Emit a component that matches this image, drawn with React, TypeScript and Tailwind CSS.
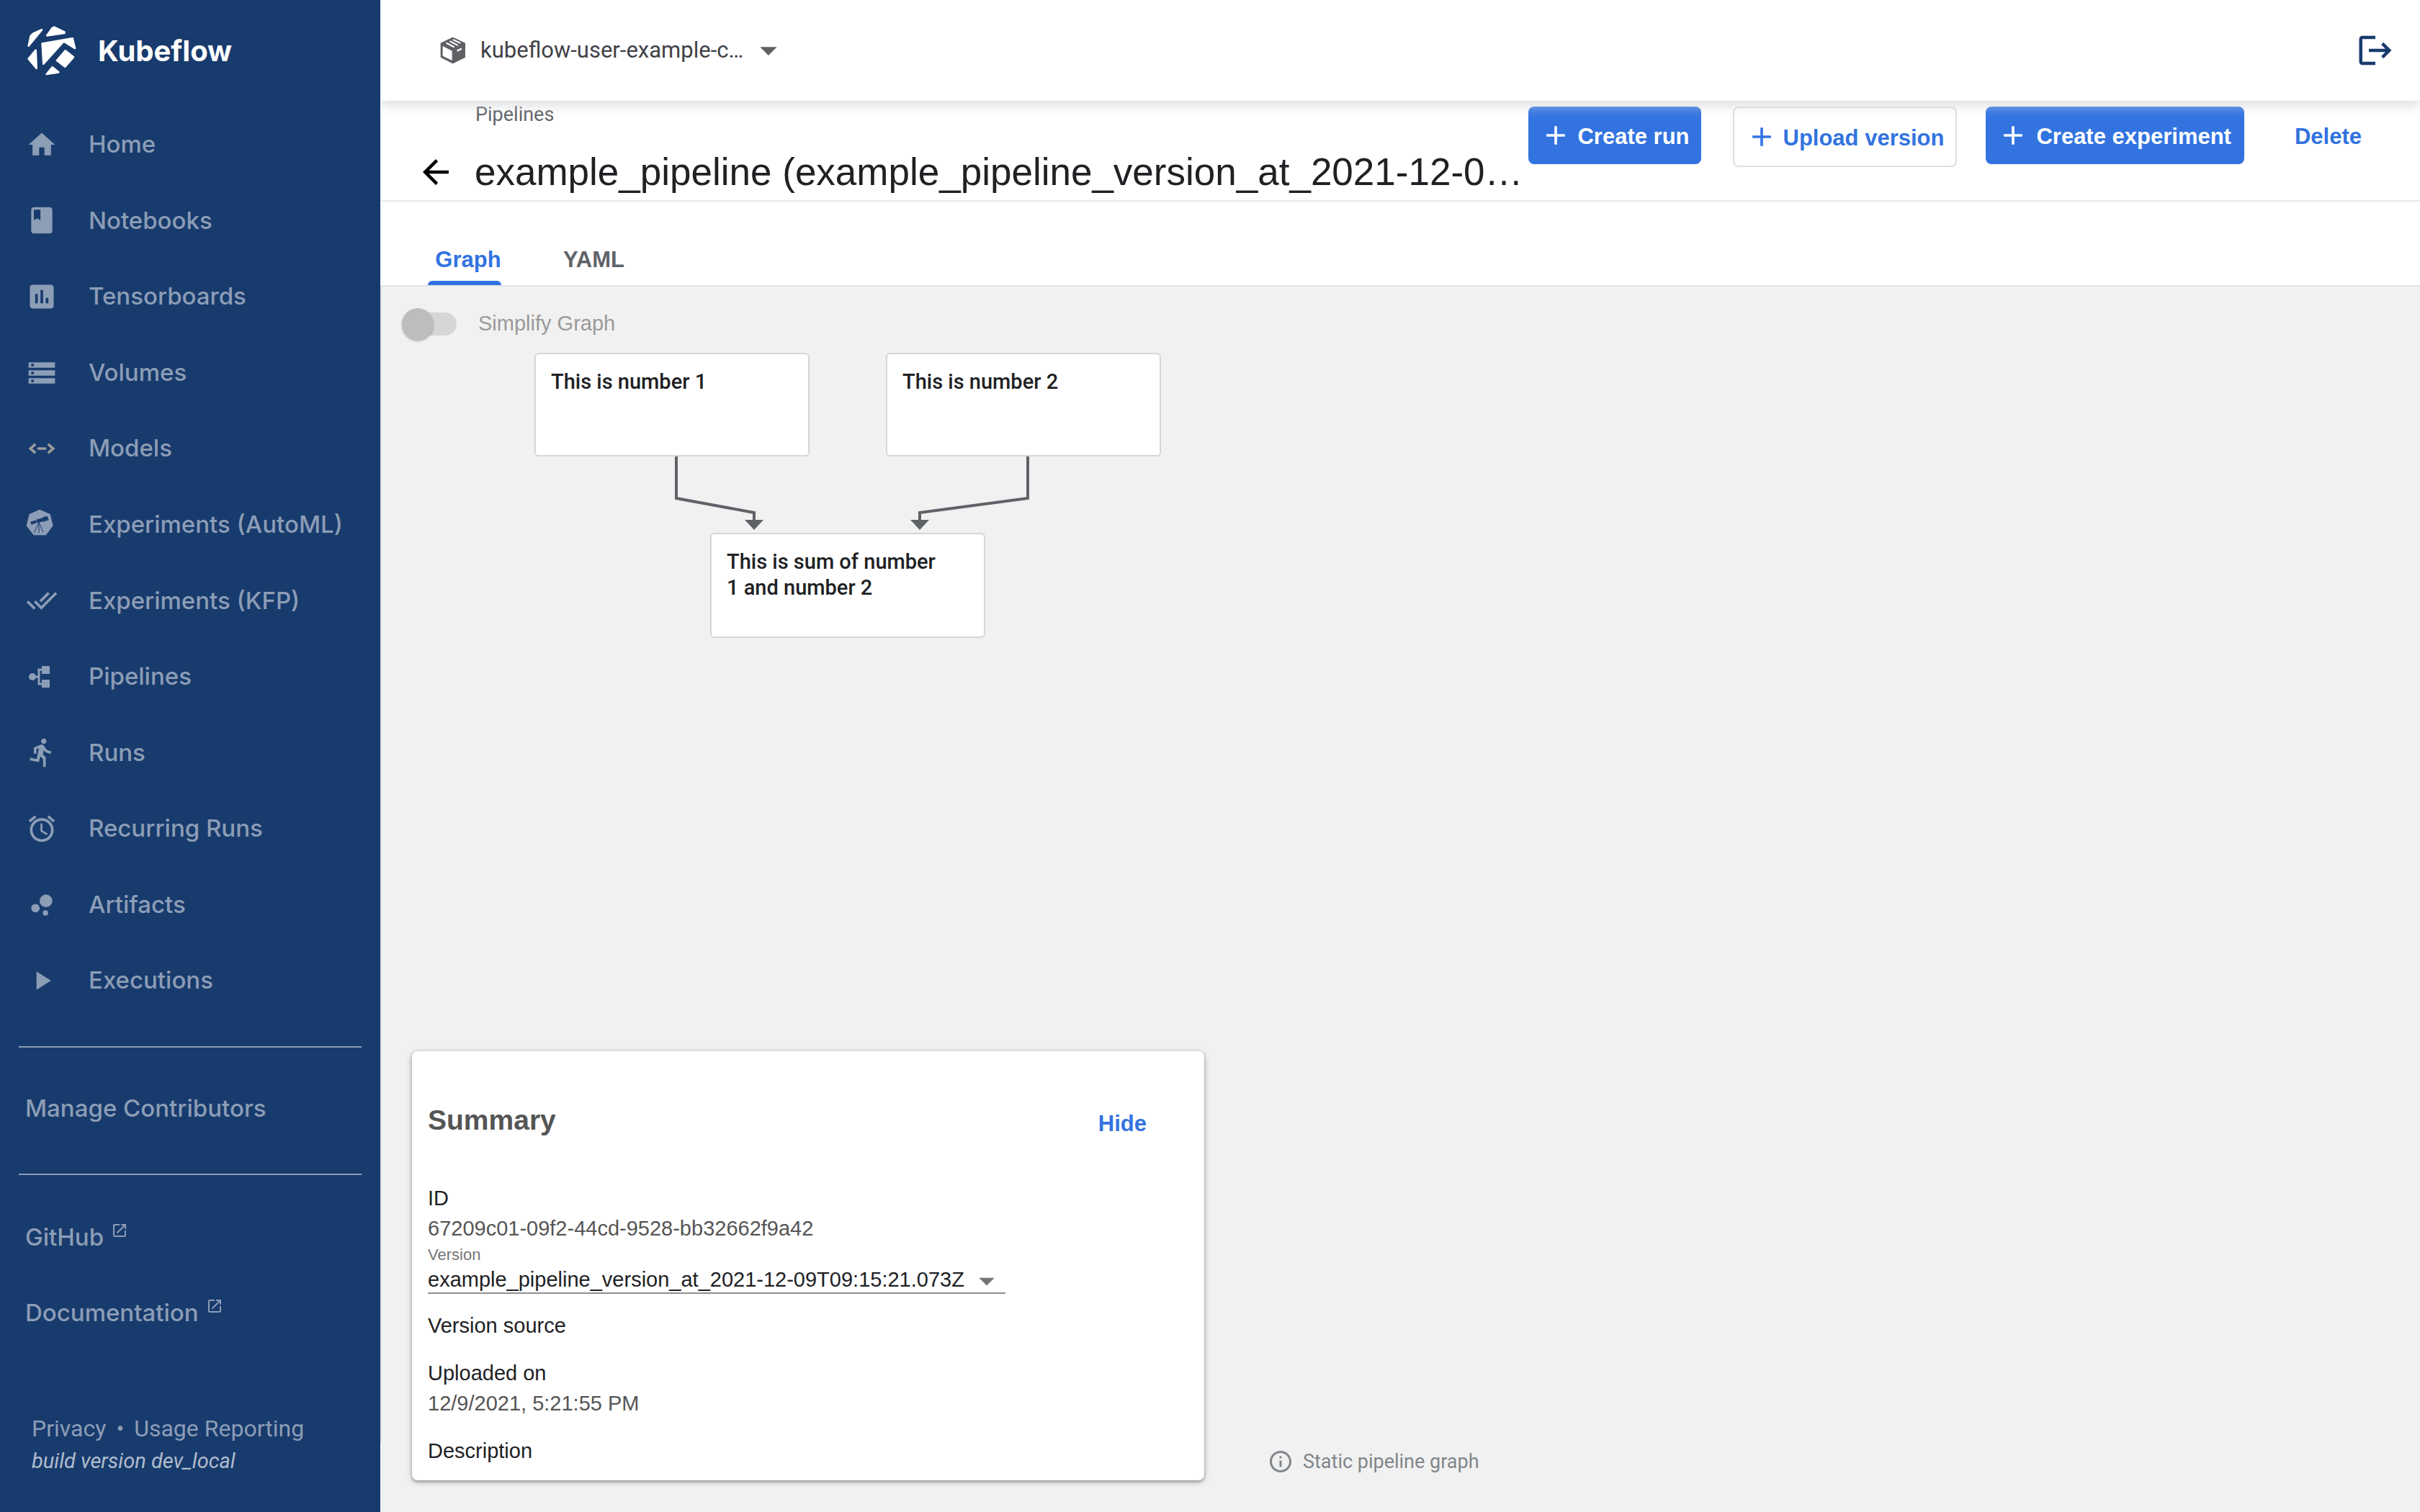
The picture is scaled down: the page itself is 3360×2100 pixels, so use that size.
import type { ReactNode } from "react";
import type { IconType } from "react-icons";
import {
  MdAccessAlarm,
  MdAdd,
  MdArrowBack,
  MdArrowDropDown,
  MdAssessment,
  MdBook,
  MdBubbleChart,
  MdDirectionsRun,
  MdDoneAll,
  MdHome,
  MdInfoOutline,
  MdLaunch,
  MdLogout,
  MdPlayArrow,
  MdStorage,
} from "react-icons/md";

type IconProps = { className?: string };

function KubeflowLogo() {
  return (
    <svg
      viewBox="24 36 204 210"
      className="h-[70px] w-[68px] shrink-0"
      fill="white"
      stroke="white"
      strokeWidth="8"
      strokeLinejoin="round"
      aria-hidden="true"
    >
      <path d="M29 119 L38 78 L48 68 L84 52 Z" />
      <path d="M106 76 L128 45 L136 41 L179 62 L178 66 Z" />
      <path d="M86 110 L212 88 L222 129 L179 102 Q175 100 172 104 L91 194 Z" />
      <path d="M59 137 L62 213 L29 173 Z" />
      <path d="M182 139 L216 166 L181 206 L147 180 Z" />
      <path d="M128 208 L154 229 L104 237 Z" />
    </svg>
  );
}

function ModelsIcon({ className }: IconProps) {
  return (
    <svg viewBox="0 0 24 24" className={className} fill="none" stroke="#9b9b9b" strokeWidth="2" aria-hidden="true">
      <path d="M7.2 8.6 L3.4 12 L7.2 15.4 M16.8 8.6 L20.6 12 L16.8 15.4" />
      <path d="M9.4 12 H14.6" strokeLinecap="round" />
    </svg>
  );
}

function TelescopeIcon({ className }: IconProps) {
  return (
    <svg viewBox="16 22 132 132" className={className} aria-hidden="true">
      <path d="M73 24 L117 43 L129 92 L99 131 L48 131 L18 92 L30 43 Z" fill="currentColor" />
      <g fill="#183b6d" stroke="#183b6d" strokeLinejoin="round">
        <path d="M85 58 L104 52 L110 67 L90 74 Z" strokeWidth="2" />
        <path d="M60 67 L84 60 L88 72 L64 79 Z" strokeWidth="2" />
        <path d="M36 76 L57 70 L60 79 L39 86 Z" strokeWidth="2" />
        <path d="M70 78 L50 121 M70 78 L88 118 M70 78 V122" fill="none" strokeWidth="3" />
      </g>
    </svg>
  );
}

function PipelinesIcon({ className }: IconProps) {
  return (
    <svg viewBox="0 0 44 44" className={className} aria-hidden="true">
      <g fill="currentColor">
        <circle cx="9" cy="22" r="5" />
        <rect x="22" y="7" width="11" height="11" />
        <rect x="22" y="26" width="11" height="11" />
      </g>
      <path d="M9 22 H18 M22 12 H18 V32 H22" fill="none" stroke="currentColor" strokeWidth="3" />
    </svg>
  );
}

function NamespaceIcon() {
  return (
    <svg viewBox="24 20 106 114" className="h-[38px] w-9 shrink-0" aria-hidden="true">
      <path
        d="M76 24 L126 47 V105 L76 130 L27 105 V47 Z"
        fill="#5f6164"
        stroke="#5f6164"
        strokeWidth="4"
        strokeLinejoin="round"
      />
      <path d="M34 59 L73 79 V119 L34 100 Z" fill="white" />
      <path d="M51 47 L80 62 M66 40 L95 55" stroke="white" strokeWidth="6" strokeLinecap="round" />
      <path d="M79 33 L106 46" stroke="white" strokeWidth="6" strokeLinecap="round" />
      <path d="M96 78 L110 71" stroke="white" strokeWidth="7" strokeLinecap="round" />
    </svg>
  );
}

const navItems: { label: string; icon: IconType | ((p: IconProps) => ReactNode) }[] = [
  { label: "Home", icon: MdHome },
  { label: "Notebooks", icon: MdBook },
  { label: "Tensorboards", icon: MdAssessment },
  { label: "Volumes", icon: MdStorage },
  { label: "Models", icon: ModelsIcon },
  { label: "Experiments (AutoML)", icon: TelescopeIcon },
  { label: "Experiments (KFP)", icon: MdDoneAll },
  { label: "Pipelines", icon: PipelinesIcon },
  { label: "Runs", icon: MdDirectionsRun },
  { label: "Recurring Runs", icon: MdAccessAlarm },
  { label: "Artifacts", icon: MdBubbleChart },
  { label: "Executions", icon: MdPlayArrow },
];

function Sidebar() {
  return (
    <aside className="relative z-20 flex w-[528px] shrink-0 flex-col bg-[#183b6d] font-['Inter',sans-serif] text-[33px] font-medium text-[#8c9db6]">
      <a href="#home" className="mb-1.5 flex h-[142px] items-center gap-[30px] pl-[38px] text-[40px] font-bold text-white">
        <KubeflowLogo />
        Kubeflow
      </a>
      <nav aria-label="Main" className="flex flex-1 flex-col">
        {navItems.map(({ label, icon: Icon }) => (
          <a key={label} href="#nav" className="flex flex-1 items-center gap-[43px] pl-9">
            <Icon className="size-11 shrink-0" />
            {label}
          </a>
        ))}
      </nav>
      <hr className="mx-[26px] mt-[38px] mb-8 border-t-2 border-[#8c9db6]" />
      <a href="#contributors" className="flex h-[105px] items-center pl-[35px]">
        Manage Contributors
      </a>
      <hr className="mx-[26px] mt-[38px] mb-[34px] border-t-2 border-[#8c9db6]" />
      {["GitHub", "Documentation"].map((label) => (
        <a key={label} href="#external" className="flex h-[105px] items-center gap-2.5 pl-[35px]">
          {label}
          <MdLaunch className="mb-5 size-6" />
        </a>
      ))}
      <footer className="mt-[86px] mb-12 pl-11 font-['Roboto',sans-serif] leading-[45px] font-normal">
        <div className="flex gap-3.5 text-[32px]">
          <a href="#privacy">Privacy</a>
          <span>•</span>
          <a href="#usage">Usage Reporting</a>
        </div>
        <p className="text-[29px] text-[#b0bccd] italic">build version dev_local</p>
      </footer>
    </aside>
  );
}

function TopBar() {
  return (
    <header className="relative z-10 flex h-[140px] shrink-0 items-center justify-between bg-white pr-[35px] pl-[83px] shadow-[0_4px_18px_#d3d5d9]">
      <div className="relative flex items-center gap-5">
        <NamespaceIcon />
        <select
          aria-label="Namespace"
          className="appearance-none bg-transparent pr-12 font-['Roboto',sans-serif] text-[31px] text-[#3f4246]"
        >
          <option>kubeflow-user-example-c…</option>
        </select>
        <MdArrowDropDown className="pointer-events-none absolute -right-[14px] size-14 text-[#5f6164]" />
      </div>
      <button type="button" aria-label="Logout" className="text-[#183b6d]">
        <MdLogout className="size-[54px]" />
      </button>
    </header>
  );
}

function Toolbar() {
  return (
    <div className="flex h-[140px] shrink-0 items-start border-b-2 border-[#e8e8ea] bg-white">
      <div className="flex min-w-0 flex-1 flex-col pl-[132px]">
        <a href="#pipelines" className="mt-[3px] font-['Roboto',sans-serif] text-[27px] leading-8 text-[#5f6368]">
          Pipelines
        </a>
        <div className="-ml-[82px] mt-[30px] flex items-center gap-[27px]">
          <button type="button" aria-label="Back" className="text-black">
            <MdArrowBack className="size-[54px]" />
          </button>
          <h1 className="text-[53px] leading-[68px] whitespace-nowrap text-[#202124]">
            example_pipeline (example_pipeline_version_at_2021-12-0…
          </h1>
        </div>
      </div>
      <div className="flex shrink-0 items-start pt-2 pr-[51px] text-[31px] font-bold">
        <button
          type="button"
          className="flex h-20 items-center gap-2 rounded-lg bg-[#3273e0] pt-1 pr-4 pl-4 text-white"
        >
          <MdAdd className="-mt-1 size-11" />
          Create run
        </button>
        <button
          type="button"
          className="ml-11 flex h-[84px] items-center gap-2 rounded-lg border-2 border-[#dfdfe1] px-4 pt-1 text-[#3273e0]"
        >
          <MdAdd className="-mt-1 size-11" />
          Upload version
        </button>
        <button
          type="button"
          className="ml-10 flex h-20 items-center gap-[10px] rounded-lg bg-[#3273e0] pt-1 pr-[18px] pl-4 text-white"
        >
          <MdAdd className="-mt-1 size-11" />
          Create experiment
        </button>
        <button type="button" className="ml-10 h-20 px-[30px] pt-1 text-[#3273e0]">
          Delete
        </button>
      </div>
    </div>
  );
}

function Tabs() {
  return (
    <div
      role="tablist"
      className="flex h-[118px] shrink-0 items-end gap-[86px] border-b-2 border-[#e4e4e6] bg-white pl-[66px] text-[31px] font-bold"
    >
      <button role="tab" aria-selected="true" type="button" className="flex w-[102px] flex-col text-[#3273e0]">
        <span className="pb-1.5 pl-2.5">Graph</span>
        <span className="h-1.5 rounded-t-lg bg-[#3273e0]" />
      </button>
      <button role="tab" aria-selected="false" type="button" className="pb-3 text-[#5f6368]">
        YAML
      </button>
    </div>
  );
}

const nodes = [
  { text: "This is number 1", className: "left-[214px] top-[92px] h-36" },
  { text: "This is number 2", className: "left-[702px] top-[92px] h-36" },
  { text: "This is sum of number 1 and number 2", className: "left-[458px] top-[342px] h-[146px]" },
];

function Graph() {
  return (
    <>
      <svg
        className="absolute top-[236px] left-[404px] h-[108px] w-[510px]"
        viewBox="0 0 510 108"
        fill="none"
        aria-hidden="true"
      >
        <path d="M7 0 V58 L115 78 V92 M495 0 V58 L345 78 V92" stroke="#5f6368" strokeWidth="4" />
        <path d="M102 88 H128 L115 102 Z M332 88 H358 L345 102 Z" fill="#5f6368" />
      </svg>
      {nodes.map((node) => (
        <div
          key={node.text}
          className={`absolute w-[382px] rounded-md border-2 border-[#d6d6d6] bg-white py-5 pr-16 pl-[21px] font-['Roboto',sans-serif] text-[29px] leading-9 font-medium text-[#202124] ${node.className}`}
        >
          {node.text}
        </div>
      ))}
    </>
  );
}

function Summary() {
  return (
    <section className="w-[1100px] rounded-lg bg-white px-[22px] pb-5 text-[29px] leading-[42px] text-[#202124] shadow-[0_2px_4px_rgba(0,0,0,0.3),0_2px_10px_rgba(0,0,0,0.2)]">
      <div className="flex items-end justify-between pt-[70px] pr-[58px]">
        <h2 className="text-[39px] leading-[52px] font-bold text-[#555]">Summary</h2>
        <button type="button" className="text-[31px] font-bold text-[#3273e0]">
          Hide
        </button>
      </div>
      <div className="pt-[61px]">ID</div>
      <div className="text-[#555]">67209c01-09f2-44cd-9528-bb32662f9a42</div>
      <label htmlFor="version" className="block text-[22px] leading-8 text-[#757575]">
        Version
      </label>
      <div className="relative w-[802px]">
        <select
          id="version"
          className="block h-[38px] w-full appearance-none border-b-2 border-[#8f8f8f] bg-transparent leading-9 text-[#202124]"
        >
          <option>example_pipeline_version_at_2021-12-09T09:15:21.073Z</option>
        </select>
        <MdArrowDropDown className="pointer-events-none absolute -top-1.5 right-0 size-[52px] text-[#757575]" />
      </div>
      <div className="pt-[23px]">Version source</div>
      <div className="pt-6">Uploaded on</div>
      <div className="text-[#555]">12/9/2021, 5:21:55 PM</div>
      <div className="pt-6">Description</div>
    </section>
  );
}

export default function App() {
  return (
    <div className="flex h-screen overflow-hidden bg-[#f1f1f1] font-['Liberation_Sans',sans-serif]">
      <Sidebar />
      <div className="flex min-w-0 flex-1 flex-col">
        <TopBar />
        <Toolbar />
        <Tabs />
        <main className="relative flex flex-1 flex-col">
          <div className="mb-[97px] flex-1 border-l-2 border-[#dedee0] pt-[30px] pl-7">
            <label className="flex w-fit items-center gap-[30px] text-[29px] text-[#9a9a9a]">
              <input type="checkbox" role="switch" disabled className="sr-only" />
              <span className="my-1.5 ml-2 flex h-8 w-[68px] items-center rounded-full bg-[#d6d6d6]">
                <span className="-ml-2 size-11 rounded-full bg-[#bdbdbd] shadow-[0_2px_3px_rgba(0,0,0,0.25)]" />
              </span>
              Simplify Graph
            </label>
          </div>
          <Graph />
          <div className="absolute bottom-[44px] left-11 flex items-end gap-[88px]">
            <Summary />
            <p className="flex items-center gap-[13px] pb-2 font-['Roboto',sans-serif] text-[27px] leading-9 text-[#80868b]">
              <MdInfoOutline className="size-9" />
              Static pipeline graph
            </p>
          </div>
        </main>
      </div>
    </div>
  );
}
